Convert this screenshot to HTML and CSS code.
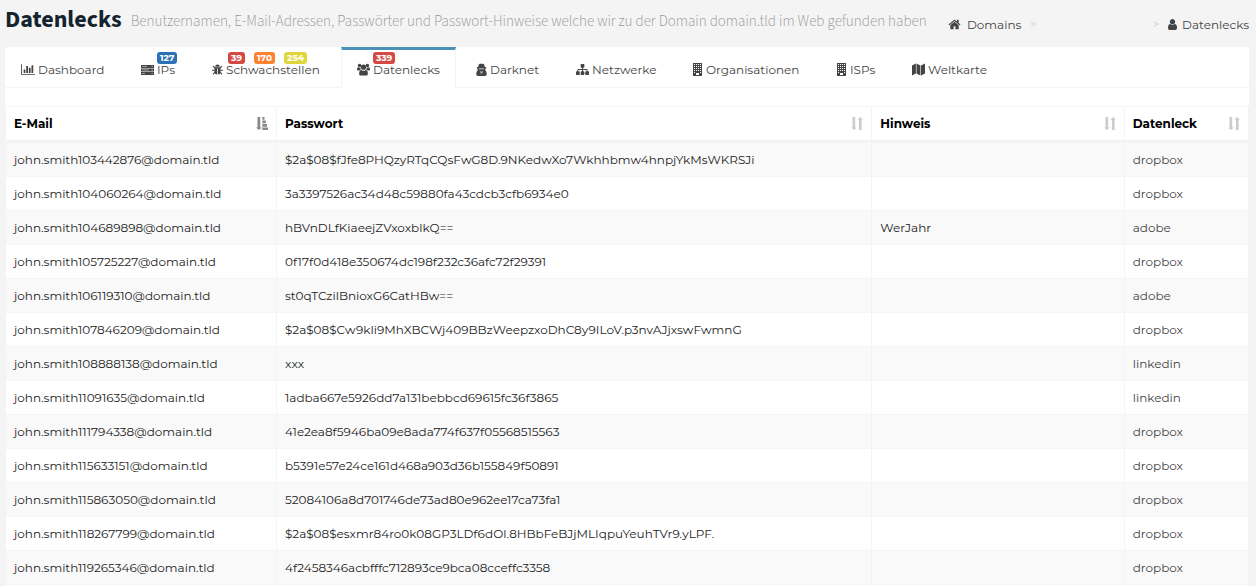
FILE: index.html
```html
<!DOCTYPE html>
<html lang="de">
<head>
<meta charset="utf-8">
<title>Datenlecks</title>
<link rel="stylesheet" href="styles.css">
</head>
<body>
<svg class="sprite" aria-hidden="true">
  <symbol id="home" viewBox="0 0 1792 1792"><path d="M1472 992v480q0 26-19 45t-45 19h-384v-384h-256v384h-384q-26 0-45-19t-19-45v-480q0-1 .5-3t.5-3l575-474 575 474q1 2 1 6zm223-69l-62 74q-8 9-21 11h-3q-13 0-21-7l-692-577-692 577q-12 8-24 7-13-2-21-11l-62-74q-8-10-7-23.5t11-21.5l719-599q32-26 76-26t76 26l244 204v-195q0-14 9-23t23-9h192q14 0 23 9t9 23v408l219 182q10 8 11 21.5t-7 23.5z"/></symbol>
  <symbol id="user" viewBox="256 128 1280 1536"><path d="M1536 1399q0 109-62.5 187t-150.5 78h-854q-88 0-150.5-78t-62.5-187q0-85 8.5-160.5t31.5-152 58.5-131 94-89 134.5-34.5q131 128 313 128t313-128q76 0 134.5 34.5t94 89 58.5 131 31.5 152 8.500 160.5zm-256-887q0 159-112.5 271.5t-271.5 112.5-271.5-112.5-112.5-271.5 112.5-271.5 271.5-112.5 271.5 112.5 112.5 271.5z"/></symbol>
  <symbol id="chart" viewBox="0 0 2048 1792"><path d="M640 896v512h-256v-512h256zm384-512v1024h-256v-1024h256zm1024 1152v128h-2048v-1536h128v1408h1920zm-640-896v768h-256v-768h256zm384-384v1152h-256v-1152h256z"/></symbol>
  <symbol id="sitemap" viewBox="0 0 1792 1792"><path d="M1792 1248v320q0 40-28 68t-68 28h-320q-40 0-68-28t-28-68v-320q0-40 28-68t68-28h96v-192h-512v192h96q40 0 68 28t28 68v320q0 40-28 68t-68 28h-320q-40 0-68-28t-28-68v-320q0-40 28-68t68-28h96v-192h-512v192h96q40 0 68 28t28 68v320q0 40-28 68t-68 28h-320q-40 0-68-28t-28-68v-320q0-40 28-68t68-28h96v-192q0-52 38-90t90-38h512v-192h-96q-40 0-68-28t-28-68v-320q0-40 28-68t68-28h320q40 0 68 28t28 68v320q0 40-28 68t-68 28h-96v192h512q52 0 90 38t38 90v192h96q40 0 68 28t28 68z"/></symbol>
  <symbol id="server" viewBox="0 0 13 13"><path fill-rule="evenodd" d="M0 2h13v3H0zM1 3.200v.6h5v-.6zm9.500 0v.6h1.500v-.6zM0 5.500h13v3H0zM1 6.700v.6h7v-.6zm9.500 0v.6h1.500v-.6zM0 9h13v3H0zm1 1.200v.6h3v-.6zm9.500 0v.6h1.500v-.6z"/></symbol>
  <symbol id="bug" viewBox="0 0 12 13"><path d="M3.500 3.500a2.500 2.500 0 0 1 5 0zM2.800 4h6.400v5.500a2.700 2.700 0 0 1-2.800 2.500V5.300h-.8V12a2.700 2.700 0 0 1-2.800-2.500z"/><path d="M3.500 5 1.500 3M8.500 5l2-2M3.500 7.300H.5m8 0h3M3.500 9l-2 2.300M8.500 9l2 2.300" stroke="currentColor" stroke-width="1.200" stroke-linecap="round"/></symbol>
  <symbol id="users" viewBox="0 0 14 13"><circle cx="2.800" cy="2.300" r="1.900"/><circle cx="11.200" cy="2.300" r="1.900"/><circle cx="7" cy="4" r="2.800"/><path d="M0 6.500C0 5 .3 4 1.200 4c.8.600 1.700.6 2.400.3C3.500 5.500 4 6 4.500 6.600 3.500 6.700 3 7 2.500 7.600H1.300C.5 7.600 0 7.200 0 6.500zM14 6.500c0-1.500-.3-2.500-1.200-2.500-.8.600-1.700.6-2.400.3.100 1.200-.4 1.700-.9 2.300 1 .1 1.500.4 2 1h1.200c.8 0 1.300-.4 1.300-1.100zM2.300 11c0-2.400.6-4 2.300-4 1.500 1.200 3.300 1.200 4.800 0 1.700 0 2.300 1.600 2.300 4 0 1.300-.7 2-1.900 2H4.200c-1.200 0-1.900-.7-1.900-2z"/></symbol>
  <symbol id="secret" viewBox="0 0 11 13"><path fill-rule="evenodd" d="M2.800 1.500C3.300.3 4.500.8 5.500.8S7.700.3 8.200 1.500L8.800 4c1 .1 1.500.4 1.500.8 0 .4-.4.700-.9.9.1.900.1 1.400-.1 1.900 1.100.5 1.400 2 1.400 3.700 0 1-.7 1.600-1.700 1.600H2c-1 0-1.700-.6-1.700-1.600 0-1.700.3-3.200 1.400-3.700-.2-.5-.2-1-.1-1.900-.5-.2-.9-.5-.9-.9 0-.4.500-.7 1.500-.8zM3 5.600v.7h2l.5-.4.500.4h2v-.7zM3.800 8.200l1 1-.4 2.600.7-2h.8l.7 2-.4-2.600 1-1-1.700.5z"/></symbol>
  <symbol id="building" viewBox="0 0 11 13"><path fill-rule="evenodd" d="M1 0h9v13H1zM2 1v1h1V1zm2 0v1h1V1zm2 0v1h1V1zm2 0v1h1V1zM2 3v1h1V3zm2 0v1h1V3zm2 0v1h1V3zm2 0v1h1V3zM2 5v1h1V5zm2 0v1h1V5zm2 0v1h1V5zm2 0v1h1V5zM2 7v1h1V7zm2 0v1h1V7zm2 0v1h1V7zm2 0v1h1V7zM2 9v1h1V9zm6 0v1h1V9zm-4 1v2h3v-2z"/></symbol>
  <symbol id="map" viewBox="0 0 13 13"><path d="M0 2.500 3.900.5v10L0 12.500zM4.500.5l3.900 2v10l-3.900-2zM9 2.500l4-2v10l-4 2z"/></symbol>
  <symbol id="sort" viewBox="0 0 12 13"><path d="M1.500 0h2.700v10.500h1.700L2.850 13 0 10.500h1.500zM7.900 13h2.700V2.500H12L9.150 0 6.300 2.500h1.600z"/></symbol>
  <symbol id="sort-asc" viewBox="0 0 12 13"><path d="M1.500 0h2.700v10.500h1.700L2.850 13 0 10.500h1.500zM6.300 0h2.200v2.700H6.300zM6.300 3.500h3.500v2.700H6.300zM6.300 7H11v2.700H6.300zM6.300 10.500H12V13H6.300z"/></symbol>
</svg>

<header class="page-header">
  <h1 class="title">Datenlecks</h1>
  <p class="subtitle">Benutzernamen, E-Mail-Adressen, Passwörter und Passwort-Hinweise welche wir zu der Domain domain.tld im Web gefunden haben</p>
  <nav class="breadcrumb" aria-label="Pfad">
    <a href="#" class="crumb crumb-home"><svg class="icon"><use href="#home"/></svg>Domains</a>
    <span class="separator">&gt;</span>
    <span class="crumb-blank"></span>
    <span class="separator">&gt;</span>
    <a href="#" class="crumb crumb-user"><svg class="icon"><use href="#user"/></svg>Datenlecks</a>
  </nav>
</header>

<main class="card">
  <nav class="tabs" aria-label="Bereiche">
    <a href="#" class="tab"><svg class="icon wide"><use href="#chart"/></svg>Dashboard</a>
    <a href="#" class="tab"><svg class="icon"><use href="#server"/></svg>IPs<span class="badges"><span class="badge blue">127</span></span></a>
    <a href="#" class="tab"><svg class="icon narrow"><use href="#bug"/></svg>Schwachstellen<span class="badges"><span class="badge red">39</span><span class="badge orange">170</span><span class="badge yellow">254</span></span></a>
    <a href="#" class="tab active" aria-current="page"><svg class="icon"><use href="#users"/></svg>Datenlecks<span class="badges"><span class="badge red">339</span></span></a>
    <a href="#" class="tab"><svg class="icon narrow"><use href="#secret"/></svg>Darknet</a>
    <a href="#" class="tab"><svg class="icon"><use href="#sitemap"/></svg>Netzwerke</a>
    <a href="#" class="tab"><svg class="icon narrow"><use href="#building"/></svg>Organisationen</a>
    <a href="#" class="tab"><svg class="icon narrow"><use href="#building"/></svg>ISPs</a>
    <a href="#" class="tab"><svg class="icon"><use href="#map"/></svg>Weltkarte</a>
  </nav>

  <table class="leaks">
    <thead>
      <tr>
        <th class="col-mail" aria-sort="ascending"><button type="button" class="sort sorted">E-Mail<svg class="sort-icon"><use href="#sort-asc"/></svg></button></th>
        <th class="col-password"><button type="button" class="sort">Passwort<svg class="sort-icon"><use href="#sort"/></svg></button></th>
        <th class="col-hint"><button type="button" class="sort">Hinweis<svg class="sort-icon"><use href="#sort"/></svg></button></th>
        <th class="col-leak"><button type="button" class="sort">Datenleck<svg class="sort-icon"><use href="#sort"/></svg></button></th>
      </tr>
    </thead>
    <tbody>
      <tr><td>john.smith103442876@domain.tld</td><td>$2a$08$fJfe8PHQzyRTqCQsFwG8D.9NKedwXo7Wkhhbmw4hnpjYkMsWKRSJi</td><td></td><td>dropbox</td></tr>
      <tr><td>john.smith104060264@domain.tld</td><td>3a3397526ac34d48c59880fa43cdcb3cfb6934e0</td><td></td><td>dropbox</td></tr>
      <tr><td>john.smith104689898@domain.tld</td><td>hBVnDLfKiaeejZVxoxblkQ==</td><td>WerJahr</td><td>adobe</td></tr>
      <tr><td>john.smith105725227@domain.tld</td><td>0f17f0d418e350674dc198f232c36afc72f29391</td><td></td><td>dropbox</td></tr>
      <tr><td>john.smith106119310@domain.tld</td><td>st0qTCzilBnioxG6CatHBw==</td><td></td><td>adobe</td></tr>
      <tr><td>john.smith107846209@domain.tld</td><td>$2a$08$Cw9kli9MhXBCWj409BBzWeepzxoDhC8y9ILoV.p3nvAJjxswFwmnG</td><td></td><td>dropbox</td></tr>
      <tr><td>john.smith108888138@domain.tld</td><td>xxx</td><td></td><td>linkedin</td></tr>
      <tr><td>john.smith11091635@domain.tld</td><td>1adba667e5926dd7a131bebbcd69615fc36f3865</td><td></td><td>linkedin</td></tr>
      <tr><td>john.smith111794338@domain.tld</td><td>41e2ea8f5946ba09e8ada774f637f05568515563</td><td></td><td>dropbox</td></tr>
      <tr><td>john.smith115633151@domain.tld</td><td>b5391e57e24ce161d468a903d36b155849f50891</td><td></td><td>dropbox</td></tr>
      <tr><td>john.smith115863050@domain.tld</td><td>52084106a8d701746de73ad80e962ee17ca73fa1</td><td></td><td>dropbox</td></tr>
      <tr><td>john.smith118267799@domain.tld</td><td>$2a$08$esxmr84ro0k08GP3LDf6dOl.8HBbFeBJjMLIqpuYeuhTVr9.yLPF.</td><td></td><td>dropbox</td></tr>
      <tr><td>john.smith119265346@domain.tld</td><td>4f2458346acbfffc712893ce9bca08cceffc3358</td><td></td><td>dropbox</td></tr>
    </tbody>
  </table>
</main>
</body>
</html>
```

FILE: styles.css
```css
* { box-sizing: border-box; }

body {
  margin: 0;
  min-height: 100vh;
  display: flex;
  flex-direction: column;
  background: #f4f4f4;
  color: #222;
  font: 12px/17px Montserrat, Inter, sans-serif;
}

a { color: #444; text-decoration: none; }
.sprite { display: none; }

.icon {
  flex: none;
  width: 13px;
  height: 13px;
  margin-right: 3px;
  fill: currentColor;
}
.icon.narrow { width: 11px; }
.icon.wide { width: 14px; }

/* Page header */
.page-header {
  display: flex;
  align-items: center;
  height: 47px;
  padding: 0 7px 0 5px;
  white-space: nowrap;
}
.title {
  margin: 0 9px 8px 0;
  color: #13242e;
  font: bold 24px/32px "Source Sans 3", "Noto Sans CJK SC", sans-serif;
}
.subtitle {
  margin: 0 0 4px;
  color: #999;
  font: 300 15px/20px "Source Sans 3", "Noto Sans CJK SC", sans-serif;
}
.breadcrumb {
  display: flex;
  align-items: center;
  margin: 2px 0 0 auto;
}
.crumb { display: flex; align-items: center; }
.crumb-home .icon { margin-right: 6px; }
.crumb-user .icon { width: 9px; height: 11px; margin-right: 5px; }
.separator { margin: 0 9px; color: #ccc; font-size: 11px; }
.crumb-blank { width: 98px; }

/* Tabs */
.card {
  flex: 1;
  margin: 0 7px 0 5px;
  background: #fff;
  border-radius: 3px 3px 0 0;
}
.tabs {
  display: grid;
  grid-template-columns: 120px 71px 145px 119px 100px 116px 144px 76px auto;
  justify-content: start;
  margin-bottom: 18px;
  border-bottom: 1px solid #f4f4f4;
}
.tab {
  position: relative;
  display: flex;
  align-items: center;
  height: 41px;
  margin: 0 4px -1px 0;
  padding: 1px 0 0 15px;
  border: 1px solid transparent;
  border-width: 3px 1px 0;
  white-space: nowrap;
}
.tab.active {
  background: #fff;
  border-color: #4a90b8 #f4f4f4 transparent;
}
.badges {
  position: absolute;
  top: 2px;
  left: 31px;
  display: flex;
  gap: 9px;
}
.badge {
  padding: 0 3px;
  border-radius: 3px;
  color: #fff;
  font-size: 9px;
  line-height: 12px;
  font-weight: bold;
}
.blue { background: #2a72b5; }
.red { background: #d64942; }
.orange { background: #fb8332; }
.yellow { background: #dfd73a; }

/* Table */
.leaks {
  width: 100%;
  table-layout: fixed;
  border-collapse: separate;
  border-spacing: 0;
  border: 1px solid #f4f4f4;
  border-width: 1px 0 0 1px;
}
.leaks th, .leaks td {
  padding: 8px;
  border-right: 1px solid #f4f4f4;
  border-bottom: 1px solid #f4f4f4;
  text-align: left;
}
.leaks th { border-bottom-width: 3px; }
.leaks tbody tr:nth-child(odd) { background: #f9f9f9; }
.leaks td:last-child { color: #444; }
.col-mail { width: 21.8%; }
.col-password { width: 47.9%; }
.col-hint { width: 20.3%; }
.col-leak { width: 10%; }

.sort {
  display: flex;
  align-items: center;
  justify-content: space-between;
  width: 100%;
  padding: 0;
  border: 0;
  background: none;
  color: #000;
  font: bold 12px/17px Montserrat, Inter, sans-serif;
  cursor: pointer;
}
.sort-icon { width: 12px; height: 13px; fill: #ccc; }
.sorted .sort-icon { fill: #888; }
```
